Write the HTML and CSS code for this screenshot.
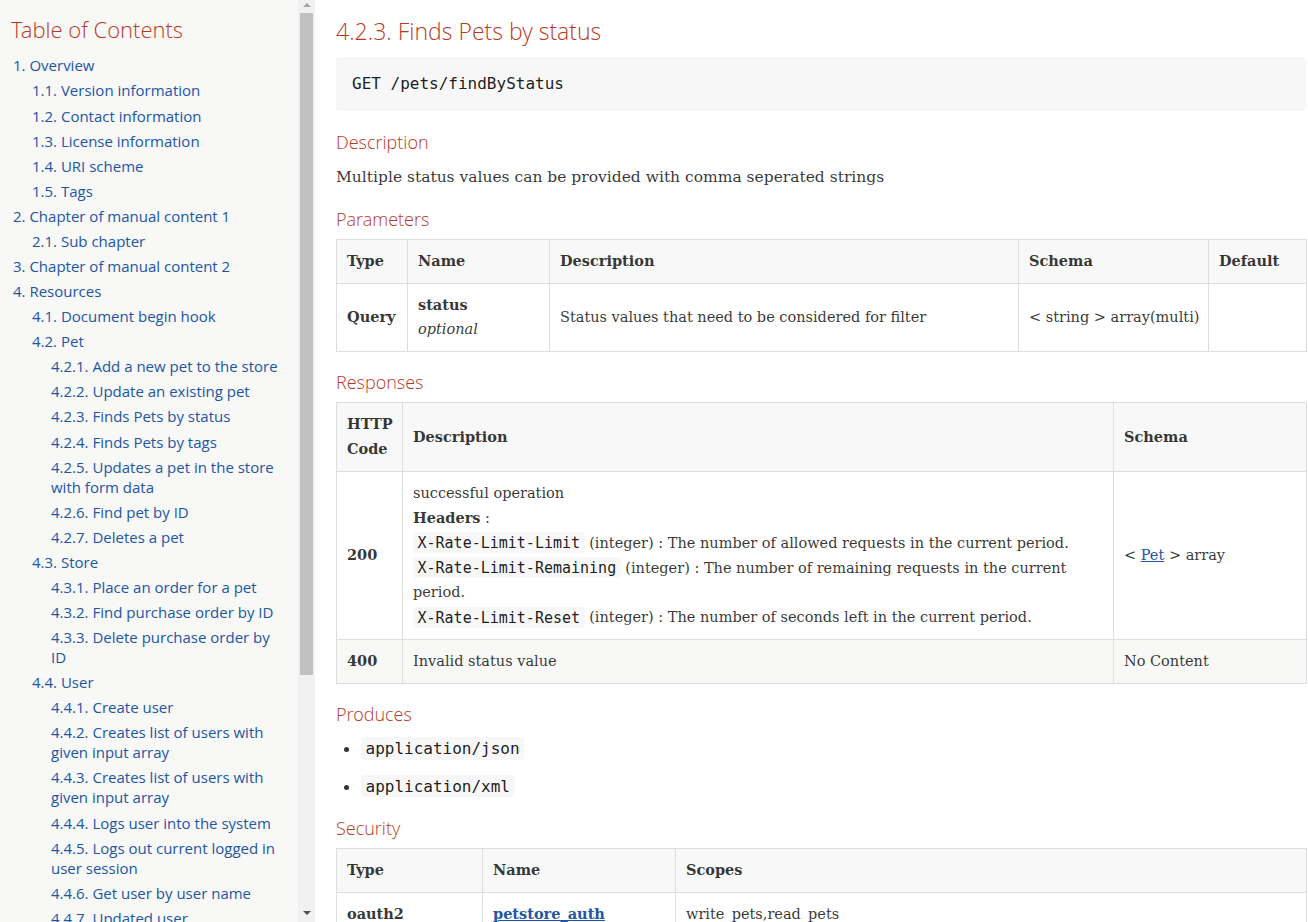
FILE: index.html
```html
<!DOCTYPE html>
<html lang="en">
<head>
<meta charset="utf-8">
<title>Finds Pets by status</title>
<link rel="stylesheet" href="styles.css">
</head>
<body>
<div class="layout">
  <nav class="toc">
    <div class="toc-body">
      <div class="toc-title">Table of Contents</div>
      <ul class="l1">
        <li><a href="#">1. Overview</a>
          <ul>
            <li><a href="#">1.1. Version information</a></li>
            <li><a href="#">1.2. Contact information</a></li>
            <li><a href="#">1.3. License information</a></li>
            <li><a href="#">1.4. URI scheme</a></li>
            <li><a href="#">1.5. Tags</a></li>
          </ul>
        </li>
        <li><a href="#">2. Chapter of manual content 1</a>
          <ul>
            <li><a href="#">2.1. Sub chapter</a></li>
          </ul>
        </li>
        <li><a href="#">3. Chapter of manual content 2</a></li>
        <li><a href="#">4. Resources</a>
          <ul>
            <li><a href="#">4.1. Document begin hook</a></li>
            <li><a href="#">4.2. Pet</a>
              <ul>
                <li><a href="#">4.2.1. Add a new pet to the store</a></li>
                <li><a href="#">4.2.2. Update an existing pet</a></li>
                <li><a href="#">4.2.3. Finds Pets by status</a></li>
                <li><a href="#">4.2.4. Finds Pets by tags</a></li>
                <li><a href="#">4.2.5. Updates a pet in the store with form data</a></li>
                <li><a href="#">4.2.6. Find pet by ID</a></li>
                <li><a href="#">4.2.7. Deletes a pet</a></li>
              </ul>
            </li>
            <li><a href="#">4.3. Store</a>
              <ul>
                <li><a href="#">4.3.1. Place an order for a pet</a></li>
                <li><a href="#">4.3.2. Find purchase order by ID</a></li>
                <li><a href="#">4.3.3. Delete purchase order by ID</a></li>
              </ul>
            </li>
            <li><a href="#">4.4. User</a>
              <ul>
                <li><a href="#">4.4.1. Create user</a></li>
                <li><a href="#">4.4.2. Creates list of users with given input array</a></li>
                <li><a href="#">4.4.3. Creates list of users with given input array</a></li>
                <li><a href="#">4.4.4. Logs user into the system</a></li>
                <li><a href="#">4.4.5. Logs out current logged in user session</a></li>
                <li><a href="#">4.4.6. Get user by user name</a></li>
                <li><a href="#">4.4.7. Updated user</a></li>
                <li><a href="#">4.4.8. Delete user</a></li>
              </ul>
            </li>
            <li><a href="#">4.5. Document end hook</a></li>
          </ul>
        </li>
        <li><a href="#">5. Definitions</a>
          <ul>
            <li><a href="#">5.1. Category</a></li>
            <li><a href="#">5.2. Order</a></li>
            <li><a href="#">5.3. Pet</a></li>
            <li><a href="#">5.4. Tag</a></li>
            <li><a href="#">5.5. User</a></li>
          </ul>
        </li>
      </ul>
    </div>
    <div class="scrollbar" aria-hidden="true">
      <div class="sb-btn sb-up"><span class="arrow-up"></span></div>
      <div class="sb-thumb"></div>
      <div class="sb-rest"></div>
      <div class="sb-btn sb-down"><span class="arrow-down"></span></div>
    </div>
  </nav>

  <main class="content">
    <h4 class="sect-title">4.2.3. Finds Pets by status</h4>
    <div class="listing"><pre>GET /pets/findByStatus</pre></div>

    <h5 class="sub">Description</h5>
    <p class="para">Multiple status values can be provided with comma seperated strings</p>

    <h5 class="sub">Parameters</h5>
    <table class="tbl">
      <colgroup><col class="c-p1"><col class="c-p2"><col class="c-p3"><col class="c-p4"><col class="c-p5"></colgroup>
      <thead>
        <tr><th>Type</th><th>Name</th><th>Description</th><th>Schema</th><th>Default</th></tr>
      </thead>
      <tbody>
        <tr>
          <td><strong>Query</strong></td>
          <td><strong>status</strong><br><em>optional</em></td>
          <td>Status values that need to be considered for filter</td>
          <td class="nowrap">&lt; string &gt; array(multi)</td>
          <td></td>
        </tr>
      </tbody>
    </table>

    <h5 class="sub">Responses</h5>
    <table class="tbl">
      <colgroup><col class="c-r1"><col class="c-r2"><col class="c-r3"></colgroup>
      <thead>
        <tr><th>HTTP Code</th><th>Description</th><th>Schema</th></tr>
      </thead>
      <tbody>
        <tr>
          <td><strong>200</strong></td>
          <td>successful operation<br><strong>Headers</strong> :<br><code>X-Rate-Limit-Limit</code> (integer) : The number of allowed requests in the current period.<br><code>X-Rate-Limit-Remaining</code> (integer) : The number of remaining requests in the current period.<br><code>X-Rate-Limit-Reset</code> (integer) : The number of seconds left in the current period.</td>
          <td>&lt; <a href="#">Pet</a> &gt; array</td>
        </tr>
        <tr>
          <td><strong>400</strong></td>
          <td>Invalid status value</td>
          <td>No Content</td>
        </tr>
      </tbody>
    </table>

    <h5 class="sub">Produces</h5>
    <ul class="bullets">
      <li><p><code>application/json</code></p></li>
      <li><p><code>application/xml</code></p></li>
    </ul>

    <h5 class="sub">Security</h5>
    <table class="tbl">
      <colgroup><col class="c-s1"><col class="c-s2"><col class="c-s3"></colgroup>
      <thead>
        <tr><th>Type</th><th>Name</th><th>Scopes</th></tr>
      </thead>
      <tbody>
        <tr>
          <td><strong>oauth2</strong></td>
          <td><strong><a href="#">petstore_auth</a></strong></td>
          <td>write_pets,read_pets</td>
        </tr>
      </tbody>
    </table>
  </main>
</div>
</body>
</html>
```

FILE: styles.css
```css
html, body {
  margin: 0;
  padding: 0;
  height: 100%;
  overflow: hidden;
  background: #fff;
}

body {
  font-family: "DejaVu Serif", serif;
  color: rgba(0, 0, 0, 0.8);
}

a {
  color: #2156a5;
}

.layout {
  display: flex;
  height: 100%;
}

/* ---------- Table of contents ---------- */
.toc {
  width: 315px;
  flex: none;
  height: 100%;
  display: flex;
  background: #f8f8f7;
}

.toc-body {
  flex: 1;
  min-width: 0;
  overflow: hidden;
  padding: 16px 14px 0 11px;
  font-family: "Open Sans", sans-serif;
  font-size: 15px;
}

.toc-title {
  font-family: "Open Sans Light", "Open Sans", sans-serif;
  font-size: 22px;
  font-weight: 300;
  line-height: 1.2;
  color: #ba3925;
  margin-bottom: 13px;
}

.toc ul {
  list-style: none;
  margin: 0;
  padding: 0;
}

.toc ul.l1 {
  padding-left: 2px;
}

.toc ul ul {
  padding-left: 19px;
}

.toc li {
  line-height: 20px;
  margin-top: 5.08px;
}

.toc a {
  color: #2156a5;
  text-decoration: none;
}

/* fake scrollbar of the toc */
.scrollbar {
  width: 17px;
  flex: none;
  display: flex;
  flex-direction: column;
  background: #f1f1f1;
}

.sb-btn {
  height: 13px;
  flex: none;
  display: flex;
  justify-content: center;
  align-items: flex-start;
  box-sizing: border-box;
}

.sb-up {
  padding-top: 3px;
}

.sb-down {
  padding-top: 2px;
}

.arrow-up {
  width: 0;
  height: 0;
  border-left: 4px solid transparent;
  border-right: 4px solid transparent;
  border-bottom: 4px solid #a3a3a3;
}

.arrow-down {
  width: 0;
  height: 0;
  border-left: 4px solid transparent;
  border-right: 4px solid transparent;
  border-top: 4px solid #505050;
}

.sb-thumb {
  height: 662px;
  flex: none;
  margin: 0 2px;
  background: #c1c1c1;
}

.sb-rest {
  flex: 1;
}

/* ---------- Content ---------- */
.content {
  flex: 1;
  min-width: 0;
  padding: 18px 2px 0 21px;
  overflow: hidden;
}

.sect-title {
  font-family: "Open Sans Light", "Open Sans", sans-serif;
  font-weight: 300;
  font-size: 23px;
  line-height: 1.2;
  color: #ba3925;
  margin: 0 0 11px;
}

.listing {
  background: #f7f7f8;
  border-radius: 4px;
  padding: 16px;
  margin-bottom: 20px;
}

.listing pre {
  margin: 0;
  font-family: "DejaVu Sans Mono", monospace;
  font-size: 16px;
  line-height: 22px;
  color: rgba(0, 0, 0, 0.9);
}

.sub {
  font-family: "Open Sans Light", "Open Sans", sans-serif;
  font-weight: 300;
  font-size: 18px;
  line-height: 22px;
  color: #ba3925;
  margin: 17px 0 9px;
}

.para {
  font-size: 15.5px;
  line-height: 27.2px;
  padding-top: 2px;
  margin: 0 0 17px;
}

/* ---------- Tables ---------- */
.tbl {
  width: 100%;
  table-layout: fixed;
  border-collapse: collapse;
  border: 1px solid #dedede;
  margin-bottom: 19px;
  font-size: 14.5px;
  line-height: 24.85px;
}

.tbl th,
.tbl td {
  border: 1px solid #dedede;
  padding: 9px 10px;
  text-align: left;
  vertical-align: middle;
  color: rgba(0, 0, 0, 0.8);
}

.tbl td.nowrap {
  white-space: nowrap;
}

.tbl th {
  font-weight: bold;
}

.tbl thead tr {
  background: #f7f8f7;
}

.tbl tbody tr:nth-child(even) {
  background: #f8f8f7;
}

.tbl strong {
  font-weight: bold;
}

.c-p1 { width: 71px; }
.c-p2 { width: 142px; }
.c-p3 { width: 469px; }
.c-p4 { width: 190px; }
.c-p5 { width: 98px; }

.c-r1 { width: 66px; }
.c-r2 { width: 711px; }
.c-r3 { width: 193px; }

.c-s1 { width: 146px; }
.c-s2 { width: 193px; }
.c-s3 { width: 631px; }

code {
  font-family: "DejaVu Sans Mono", monospace;
  color: rgba(0, 0, 0, 0.9);
  background: #f7f7f8;
  border-radius: 4px;
  padding: 0.1em 0.5ex;
  line-height: 1;
  word-spacing: -0.15em;
}

.tbl code {
  font-size: 15px;
}

/* ---------- Lists ---------- */
.bullets {
  list-style: none;
  margin: 0;
  padding-left: 25px;
  font-size: 15.5px;
}

.bullets li p {
  margin: 0 0 8px;
  padding-top: 2px;
  line-height: 27.2px;
}

.bullets li p::before {
  content: "";
  display: inline-block;
  width: 5px;
  height: 5px;
  border-radius: 50%;
  background: rgba(0, 0, 0, 0.8);
  margin-left: -17px;
  margin-right: 12px;
  vertical-align: middle;
}

.bullets li:last-child p {
  margin-bottom: 0;
}

.bullets code {
  font-size: 16px;
}
```
